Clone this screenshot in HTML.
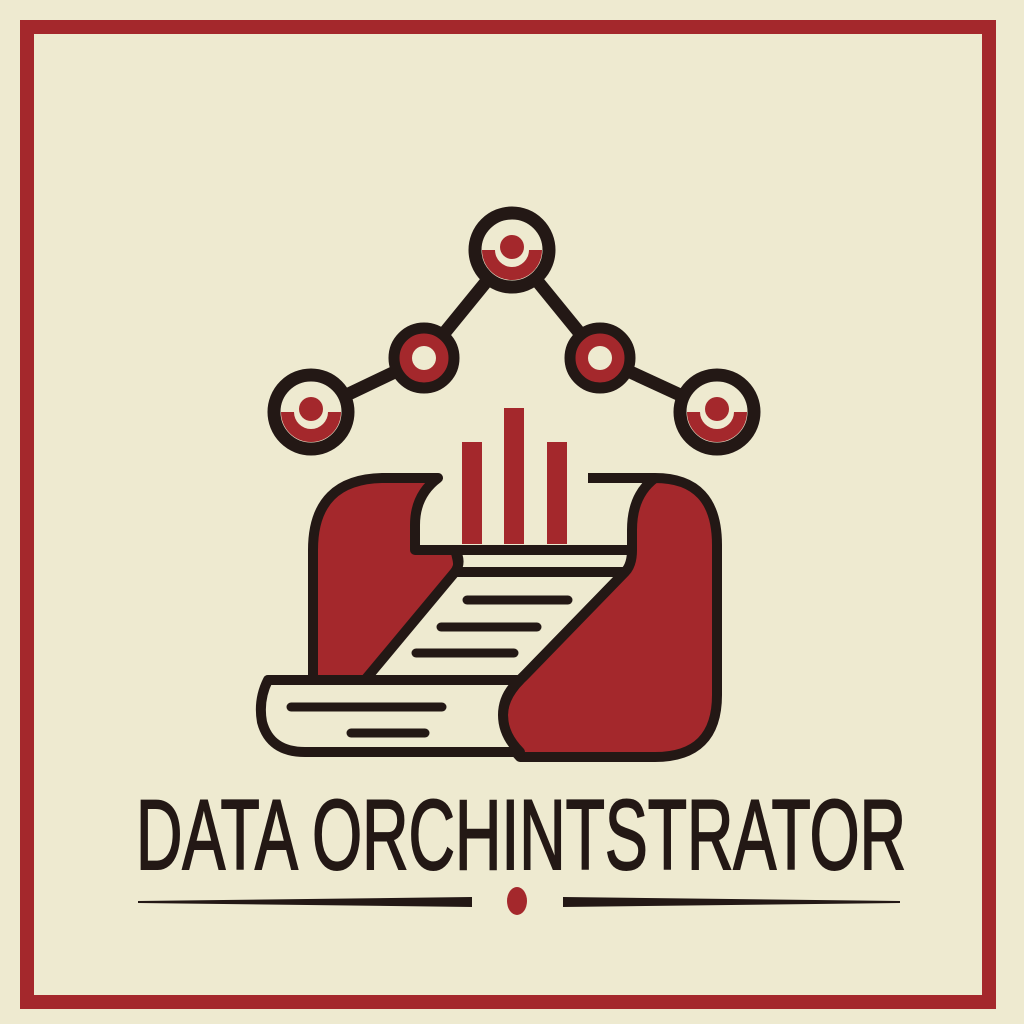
<!DOCTYPE html>
<html><head><meta charset="utf-8"><style>
html,body{margin:0;padding:0;background:#eeead0;}
svg{display:block}
</style></head><body>
<svg width="1024" height="1024" viewBox="0 0 1024 1024" xmlns="http://www.w3.org/2000/svg">
<rect width="1024" height="1024" fill="#eeead0"/>
<rect x="27" y="27" width="962" height="975" fill="none" stroke="#a4282c" stroke-width="14"/>
<g stroke="#231815" stroke-width="13" stroke-linecap="round" fill="none">
<line x1="311" y1="412" x2="424" y2="358"/>
<line x1="424" y1="358" x2="512" y2="250"/>
<line x1="512" y1="250" x2="600" y2="358"/>
<line x1="600" y1="358" x2="717" y2="412"/>
</g>
<g>
<circle cx="512" cy="250" r="37" fill="#eeead0" stroke="#231815" stroke-width="13"/>
<path d="M482 250 A30 30 0 0 0 542 250 Z" fill="#a4282c"/>
<circle cx="512" cy="250" r="17" fill="#eeead0"/>
<circle cx="512" cy="247" r="12" fill="#a4282c"/>
<circle cx="311" cy="412" r="37" fill="#eeead0" stroke="#231815" stroke-width="13"/>
<path d="M281 412 A30 30 0 0 0 341 412 Z" fill="#a4282c"/>
<circle cx="311" cy="412" r="17" fill="#eeead0"/>
<circle cx="311" cy="409" r="12" fill="#a4282c"/>
<circle cx="717" cy="412" r="37" fill="#eeead0" stroke="#231815" stroke-width="13"/>
<path d="M687 412 A30 30 0 0 0 747 412 Z" fill="#a4282c"/>
<circle cx="717" cy="412" r="17" fill="#eeead0"/>
<circle cx="717" cy="409" r="12" fill="#a4282c"/>
<circle cx="424" cy="358" r="30" fill="#a4282c" stroke="#231815" stroke-width="11"/>
<circle cx="424" cy="358" r="12" fill="#eeead0"/>
<circle cx="600" cy="358" r="30" fill="#a4282c" stroke="#231815" stroke-width="11"/>
<circle cx="600" cy="358" r="12" fill="#eeead0"/>
</g>
<rect x="462" y="442" width="20" height="102" fill="#a4282c"/>
<rect x="504" y="408" width="20" height="136" fill="#a4282c"/>
<rect x="547" y="442" width="20" height="102" fill="#a4282c"/>
<g stroke="#231815" stroke-width="10" stroke-linejoin="round">
<path d="M438 478 L385 478 Q313 478 313 550 L313 680 L365 680 L455 590 Q462 570 455 550 L415 550 L415 525 Q415 495 438 478 Z" fill="#a4282c"/>
<path d="M455 550 L632 550 L632 572 L455 572 Q462 562 455 550 Z" fill="#eeead0"/>
<path d="M455 572 L625 572 L520 680 L365 680 Z" fill="#eeead0"/>
<path d="M588 478 L655 478 Q717 478 717 545 L717 695 Q717 757 655 757 L520 757 Q503 740 503 715 Q503 695 525 675 L625 572 Q632 565 632 550 L632 530 Q632 495 655 478" fill="#a4282c"/>
<path d="M520 680 L268 680 Q258 700 262 722 Q270 752 305 752 L520 752 Q503 735 503 715 Q503 695 520 680 Z" fill="#eeead0"/>
</g>
<g stroke="#231815" stroke-width="9" stroke-linecap="round">
<line x1="467" y1="600" x2="568" y2="600"/>
<line x1="441" y1="627" x2="537" y2="627"/>
<line x1="416" y1="653" x2="514" y2="653"/>
<line x1="291" y1="707" x2="442" y2="707"/>
<line x1="351" y1="733" x2="425" y2="733"/>
</g>
<text x="136" y="869" textLength="770" lengthAdjust="spacingAndGlyphs" font-family="Liberation Sans, sans-serif" font-size="99" fill="#231815" stroke="#231815" stroke-width="2">DATA ORCHINTSTRATOR</text>
<polygon points="138,901 472,897 472,907 138,903" fill="#231815"/>
<polygon points="563,897 900,901 900,903 563,907" fill="#231815"/>
<ellipse cx="517" cy="901" rx="10" ry="14" fill="#a4282c"/>
</svg>
</body></html>
